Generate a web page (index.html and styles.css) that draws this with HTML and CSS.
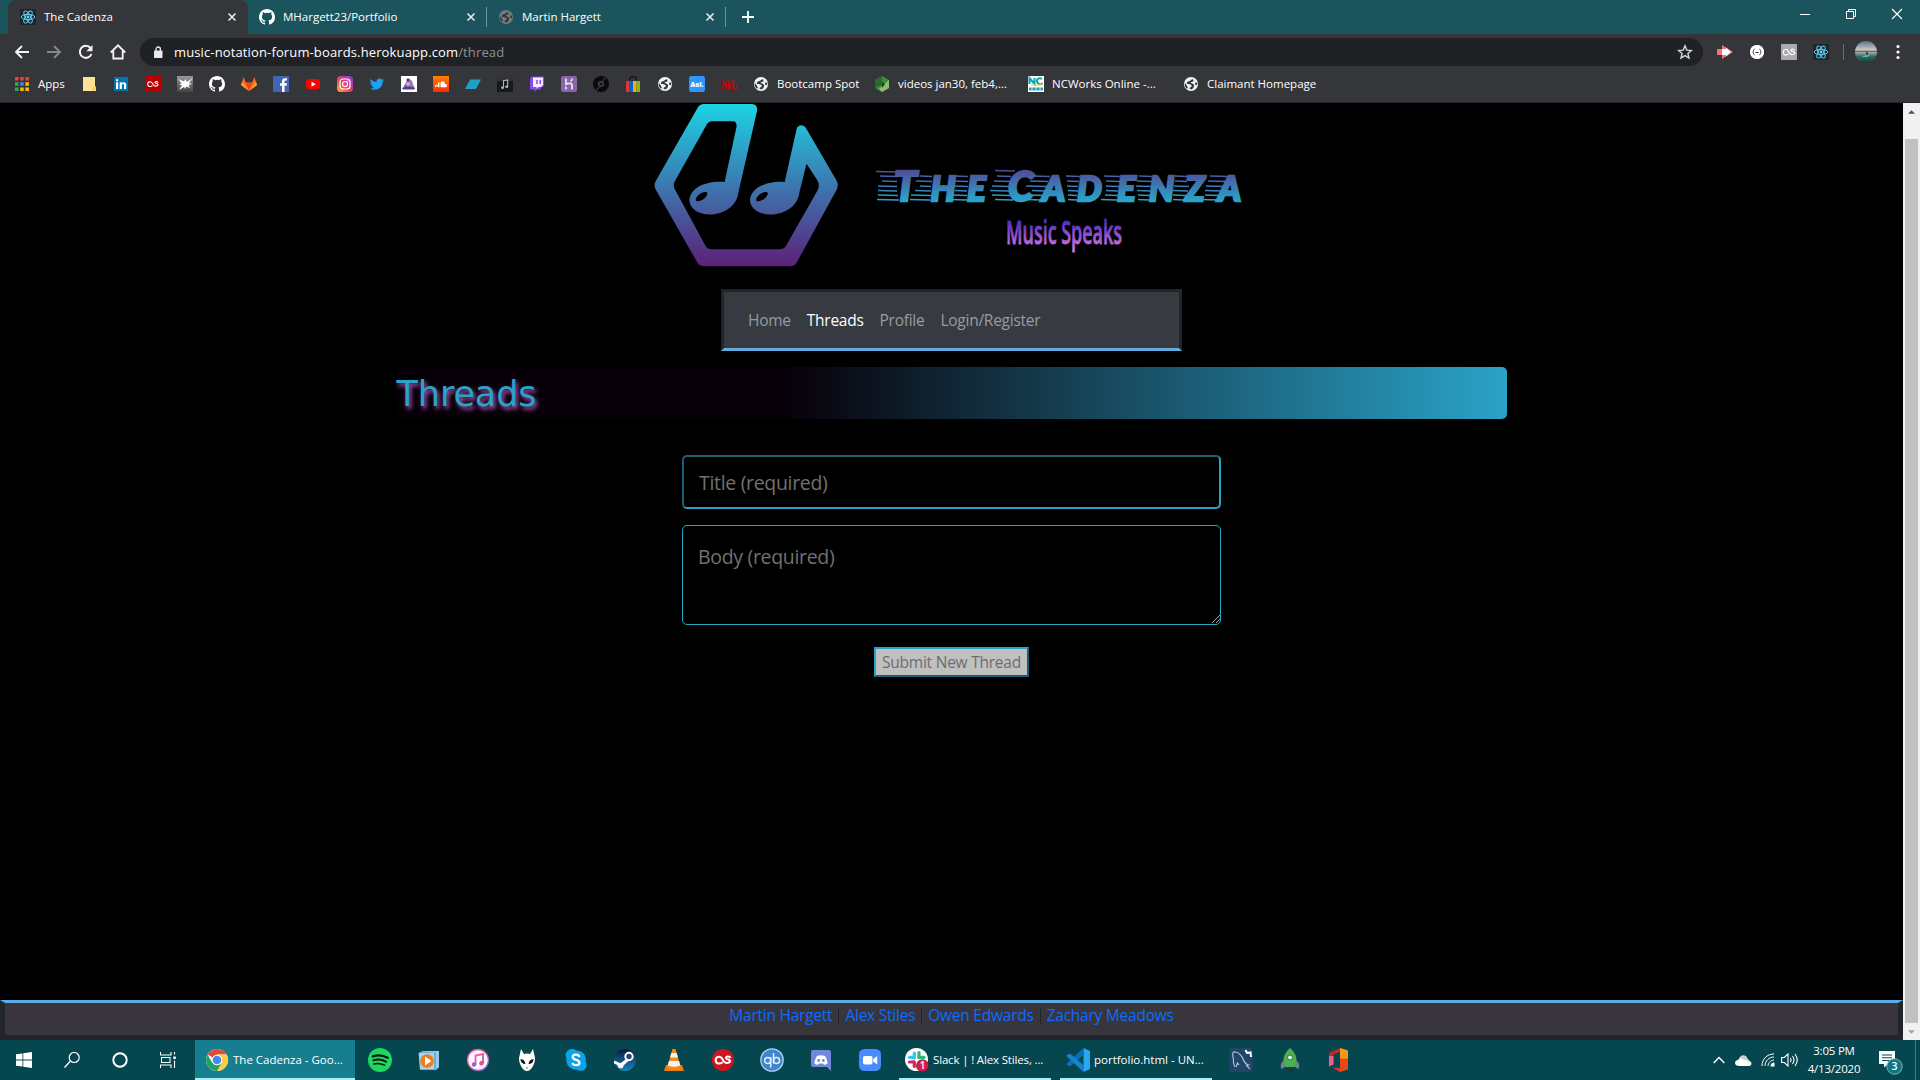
FILE: index.html
```html
<!DOCTYPE html>
<html lang="en">
<head>
<meta charset="utf-8">
<title>The Cadenza</title>
<link rel="stylesheet" href="styles.css">
</head>
<body>
<svg class="defs" width="0" height="0">
  <symbol id="react" viewBox="0 0 16 16"><rect width="16" height="16" rx="1" fill="#20232a"/><g fill="none" stroke="#61dafb" stroke-width=".9"><ellipse cx="8" cy="8" rx="6.8" ry="2.6"/><ellipse cx="8" cy="8" rx="6.8" ry="2.6" transform="rotate(60 8 8)"/><ellipse cx="8" cy="8" rx="6.8" ry="2.6" transform="rotate(120 8 8)"/></g><circle cx="8" cy="8" r="1.4" fill="#61dafb"/></symbol>
  <symbol id="github" viewBox="0 0 16 16"><path fill="#fff" d="M8 0C3.58 0 0 3.58 0 8c0 3.54 2.29 6.53 5.47 7.59.4.07.55-.17.55-.38 0-.19-.01-.82-.01-1.49-2.01.37-2.53-.49-2.69-.94-.09-.23-.48-.94-.82-1.13-.28-.15-.68-.52-.01-.53.63-.01 1.08.58 1.23.82.72 1.21 1.87.87 2.33.66.07-.52.28-.87.51-1.07-1.78-.2-3.64-.89-3.64-3.95 0-.87.31-1.59.82-2.15-.08-.2-.36-1.02.08-2.12 0 0 .67-.21 2.2.82a7.6 7.6 0 0 1 4 0c1.53-1.04 2.2-.82 2.2-.82.44 1.1.16 1.92.08 2.12.51.56.82 1.27.82 2.15 0 3.07-1.87 3.75-3.65 3.95.29.25.54.73.54 1.48 0 1.07-.01 1.93-.01 2.2 0 .21.15.46.55.38A8.01 8.01 0 0 0 16 8c0-4.42-3.58-8-8-8z"/></symbol>
  <symbol id="globe" viewBox="0 0 16 16"><circle cx="8" cy="8" r="7" fill="currentColor"/><path fill="#35363a" d="M10 3.200C8 3 8.300 4.600 6.500 4.900c-1.500.3-3 1.200-2.600 2.500.4 1.200 2.300.6 3.600 1 1.100.4 1.600 1.300 1 2.200-.6.800-1.600.8-2.100 2l1.800.8c1.300-.3 2.600-1.600 2.900-3.100.3-1.600-.8-2.600-2.400-3-1-.3-1.500-.6-.8-1.100.8-.5 2.300-.3 2.700-1.300z"/><path fill="#35363a" d="M2 7l1.800 2.500 1.200 2.700-1.500.3C2 11 1.500 9 2 7zM12 6.500l2.300.3c0 1-.3 1.800-.6 2.500l-1.500-.5z"/></symbol>
  <symbol id="close" viewBox="0 0 10 10"><path d="M1.500 1.500l7 7m0-7l-7 7" stroke="#e8eaed" stroke-width="1.600" fill="none"/></symbol>
</svg>

<header class="browser">
  <div class="tabstrip">
    <div class="tab active"><svg class="i16"><use href="#react"/></svg><span class="title">The Cadenza</span><svg class="x"><use href="#close"/></svg></div>
    <div class="tab"><svg class="i16"><use href="#github"/></svg><span class="title">MHargett23/Portfolio</span><svg class="x"><use href="#close"/></svg></div>
    <div class="tab last"><svg class="i16 dim"><use href="#globe"/></svg><span class="title">Martin Hargett</span><svg class="x"><use href="#close"/></svg></div>
    <svg class="newtab" viewBox="0 0 12 12"><path d="M6 0v12M0 6h12" stroke="#fff" stroke-width="1.800"/></svg>
    <div class="winbtns">
      <svg viewBox="0 0 12 12"><path d="M1 6.500h10" stroke="#fff"/></svg>
      <svg viewBox="0 0 12 12"><path d="M1.500 3.500h7v7h-7zM3.500 3.500v-2h7v7h-2" stroke="#fff" fill="none"/></svg>
      <svg viewBox="0 0 12 12"><path d="M1 1l10 10M11 1L1 11" stroke="#fff" stroke-width="1.100"/></svg>
    </div>
  </div>

  <div class="toolbar">
    <svg class="nav" viewBox="0 0 16 16"><path d="M15 8H2M8 2L2 8l6 6" fill="none" stroke="#f1f3f4" stroke-width="1.900"/></svg>
    <svg class="nav" viewBox="0 0 16 16"><path d="M1 8h13M8 2l6 6-6 6" fill="none" stroke="#85878a" stroke-width="1.900"/></svg>
    <svg class="nav" viewBox="0 0 16 16"><path d="M13.500 10A6 6 0 1 1 12.500 4" fill="none" stroke="#f1f3f4" stroke-width="2"/><path d="M14.500 1v6.200H8.300z" fill="#f1f3f4"/></svg>
    <svg class="nav" viewBox="0 0 16 16"><path d="M0.800 8.500L8 1.300l7.200 7.200M3.300 7v7.500h9.400V7" fill="none" stroke="#f1f3f4" stroke-width="1.800"/></svg>
    <div class="omnibox">
      <svg class="lock" viewBox="0 0 10 12"><rect x="1" y="4.500" width="8.500" height="7.500" rx=".8" fill="#e8eaed"/><path d="M3 5V3.200a2.200 2.200 0 0 1 4.400 0V5" fill="none" stroke="#e8eaed" stroke-width="1.300"/></svg>
      <span class="url"><span class="host">music-notation-forum-boards.herokuapp.com</span><span class="path">/thread</span></span>
      <svg class="star" viewBox="0 0 16 16"><path d="M8 1.800l1.800 4.300 4.600.4-3.500 3 1.100 4.600-4-2.500-4 2.500 1.100-4.600-3.500-3 4.600-.4z" fill="none" stroke="#d5d7da" stroke-width="1.400"/></svg>
    </div>
    <div class="exts">
      <svg viewBox="0 0 16 16"><path d="M0 5h5V1l11 7-11 7v-4H0z" fill="#f4736f"/><path d="M5 5h4v-1.500l5 4.500-5 4.500V11H5z" fill="#fff"/></svg>
      <svg viewBox="0 0 16 16"><circle cx="8" cy="8" r="7.700" fill="#fff" stroke="#222"/><path d="M5.500 5.200c-1.200 0-.6 2.200-1.800 2.800 1.200.6.6 2.800 1.800 2.800M10.500 5.200c1.200 0 .6 2.200 1.800 2.800-1.200.6-.6 2.800-1.800 2.800M6.500 8.500h3" fill="none" stroke="#333"/></svg>
      <svg viewBox="0 0 16 16"><rect width="16" height="16" rx="1" fill="#ababab"/><path d="M7.500 10.300C4 12 2 10.500 2.200 8 2.300 5 6 4.600 7.300 7.200c.9 2 1.400 3.500 3.600 3.400 3.400-.2 3.600-2.800 1-3.100-2.600-.3-1.900-2.500-.1-2.400 1 0 1.500.5 1.700 1.200" fill="none" stroke="#fff" stroke-width="1.200"/></svg>
      <svg><use href="#react"/></svg>
    </div>
    <span class="sep"></span>
    <svg class="avatar" viewBox="0 0 22 22"><defs><linearGradient id="av" x2="0" y2="1"><stop offset="0" stop-color="#5d7088"/><stop offset=".3" stop-color="#a9b3bd"/><stop offset=".42" stop-color="#d9c9bb"/><stop offset=".46" stop-color="#57564c"/><stop offset=".52" stop-color="#9aa9a4"/><stop offset=".7" stop-color="#35685f"/><stop offset="1" stop-color="#173d2e"/></linearGradient></defs><circle cx="11" cy="11" r="11" fill="url(#av)"/><path d="M7 15l8-1.500-2 2.500H8z" fill="#4bb6cf"/><path d="M11 11h2v3h-2z" fill="#593f39"/></svg>
    <svg class="dots" viewBox="0 0 4 16"><g fill="#fff"><circle cx="2" cy="2.500" r="1.600"/><circle cx="2" cy="8" r="1.600"/><circle cx="2" cy="13.500" r="1.600"/></g></svg>
  </div>

  <div class="bookmarks">
    <svg class="apps" viewBox="0 0 14 14"><path fill="#ea4335" d="M0 0h3.500v3.500H0zM5.200 0h3.500v3.500H5.200zM10.400 0h3.500v3.500h-3.500z"/><path fill="#34a853" d="M0 5.200h3.500v3.500H0zM0 10.400h3.500v3.500H0z"/><path fill="#4285f4" d="M5.200 5.200h3.500v3.500H5.200z"/><path fill="#fbbc05" d="M10.400 5.200h3.500v3.500h-3.500zM5.200 10.400h3.500v3.500H5.200zM10.400 10.400h3.500v3.500h-3.500z"/></svg>
    <span class="bk-label apps-label">Apps</span>
    <div class="bk-icons">
      <svg viewBox="0 0 16 16"><path d="M2 1h12v9l1 1v4H2z" fill="#fde293"/><path d="M11.500 14.500V11h2.700v3.500z" fill="#f7cf4d"/></svg>
      <svg viewBox="0 0 16 16"><rect x="1" y="1" width="14" height="14" fill="#0274b3"/><path d="M3 6.300h2.200V13H3zM3 3.200h2.200v2H3zM6.700 6.300h2v1c1-1.600 4.500-1.500 4.500 1.400V13H11V9.500c0-2-2.100-1.800-2.100 0V13H6.700z" fill="#fff"/></svg>
      <svg viewBox="0 0 16 16"><rect width="16" height="16" rx="1" fill="#b90000"/><path d="M7.500 9.800C4.500 11.300 2.500 10 2.700 8c.1-2.600 3.500-2.900 4.600-.8.900 1.900 1.400 3 3.200 2.900 3.100-.2 3.200-2.300 1-2.600-2.300-.3-1.700-2 .1-1.900.8 0 1.300.4 1.500.9" fill="none" stroke="#fff" stroke-width="1.100"/></svg>
      <svg viewBox="0 0 16 16"><defs><linearGradient id="gb" x2="0" y2="1"><stop stop-color="#999"/><stop offset="1" stop-color="#444"/></linearGradient></defs><rect width="16" height="16" fill="url(#gb)"/><path d="M15.500 2L10 6 8.500 3 7 5.500 1.500 3l3 4.500L2 8.500l3 .8L2 14l5-3 1.500 2 .5-2.500 4 1.500-1.500-3L15 8l-3-1z" fill="#fff"/></svg>
      <svg><use href="#github"/></svg>
      <svg viewBox="0 0 16 16"><path d="M8 15L0 9l2.700-8 2 5.500h6.600l2-5.500L16 9z" fill="#fc6d26"/><path d="M8 15L4.700 6.500h6.600z" fill="#e24329"/><path d="M0 9l1-3 7 9zM16 9l-1-3-7 9z" fill="#fca326"/></svg>
      <svg viewBox="0 0 16 16"><rect width="16" height="16" fill="#4267b2"/><path d="M9 16V9.800H7V7.200h2V5.500C9 3.300 10.300 2.200 12.200 2.200l1.800.1v2.300h-1.300c-1 0-1.200.5-1.200 1.200v1.400H14l-.4 2.600h-2.100V16z" fill="#fff"/></svg>
      <svg viewBox="0 0 16 16"><rect x="1" y="3" width="14" height="10.500" rx="3" fill="#f00"/><path d="M6.500 5.800v5L10.800 8.300z" fill="#fff"/></svg>
      <svg viewBox="0 0 16 16"><defs><linearGradient id="ig" x1="0" y1="1" x2="1" y2="0"><stop stop-color="#fdc04f"/><stop offset=".35" stop-color="#f4503f"/><stop offset=".65" stop-color="#c935a0"/><stop offset="1" stop-color="#6a4cdb"/></linearGradient></defs><rect width="16" height="16" rx="4" fill="url(#ig)"/><g fill="none" stroke="#fff" stroke-width="1.200"><rect x="3" y="3" width="10" height="10" rx="3"/><circle cx="8" cy="8" r="2.500"/></g><circle cx="11" cy="5" r=".7" fill="#fff"/></svg>
      <svg viewBox="0 0 16 16"><path d="M1.500 3c1.700 1.900 3.700 2.800 6 2.900C7 3 10.700 1.500 12.700 3.600L14.600 2.900 13.400 4.600l1.700-.5-1.500 1.600c.2 6.200-6.800 10.100-12.600 6.800 1.600.1 3-.3 4-1.300-1.300-.1-2.200-.9-2.600-2l1.200-.1C2.200 8.700 1.300 7.500 1.400 6.200l1.200.3C1.300 5.500.9 4.300 1.500 3z" fill="#1da1f2"/></svg>
      <svg viewBox="0 0 16 16"><rect width="16" height="16" fill="#fff"/><path d="M2 13l3-7 3-3.500 3 2.500 1 3 2 5z" fill="#9a7bb5"/><path d="M1 12c4-2 9-2 13 0l-1 1.500H2zM5 4l2-2 2 2-2 2zM3 9l2 1-1 2M10 8l3 1" fill="#4f4383"/><path d="M7 6l2 2-2 2-2-2z" fill="#e5b2d0"/></svg>
      <svg viewBox="0 0 16 16"><defs><linearGradient id="sc" x2="0" y2="1"><stop stop-color="#ff8000"/><stop offset="1" stop-color="#ff2a00"/></linearGradient></defs><rect width="16" height="16" fill="url(#sc)"/><path d="M2.500 9v2M4 8v3M5.500 6.500v4.700M7 6.500v4.700" stroke="#fff"/><path d="M8 11.200V5.700c2-1 4 .2 4.200 2.200 2.500-.2 2.500 3.300.3 3.300z" fill="#fff"/></svg>
      <svg viewBox="0 0 16 16"><path d="M5 3.500h11l-5 9.500H0z" fill="#1fa0c3"/></svg>
      <svg viewBox="0 0 16 16"><rect width="16" height="16" fill="#17181a"/><path d="M0 0h16v5H0z" fill="#333"/><path d="M6.500 11.500V4.800l4.200-.8v6.500" fill="none" stroke="#a9b7c6" stroke-width="1.100"/><ellipse cx="5.500" cy="11.700" rx="1.500" ry="1.200" fill="#a9b7c6"/><ellipse cx="9.700" cy="10.700" rx="1.500" ry="1.200" fill="#a9b7c6"/></svg>
      <svg viewBox="0 0 16 16"><path d="M2 .5h13v9l-4 4H8L5.500 16v-2.500H1V3z" fill="#8b45f5"/><path d="M4 1.500h10V9l-2.200 2H9.500l-2 1.700V11H4z" fill="#f3edff"/><path d="M8 4v4M11.300 4v4" stroke="#8b45f5" stroke-width="1.500"/></svg>
      <svg viewBox="0 0 16 16"><rect width="16" height="16" rx="2" fill="#8a66a8"/><path d="M5 2.500v5.700c2.500-1.300 6-1.300 6 .8v4.500M11 2.500c0 1.300-.4 2-1.200 2.800" fill="none" stroke="#eee6f5" stroke-width="1.700"/><path d="M4.200 10l2.400 1.900-2.400 2z" fill="#eee6f5"/></svg>
      <svg viewBox="0 0 16 16"><circle cx="8" cy="8" r="8" fill="#0a0a0b"/><circle cx="8" cy="8" r="3" fill="#45464a"/><circle cx="8" cy="8" r="1.600" fill="#111"/><path d="M9.500 5L13 1.500M6.500 11L3 14.500" stroke="#35363a" stroke-width="1.300"/></svg>
      <svg viewBox="0 0 16 16"><path d="M5 4V2.500C5 .3 11 .3 11 2.500V4" fill="none" stroke="#111" stroke-width="1.200"/><path d="M1 5h3.500v11H1z" fill="#e53238"/><path d="M4.500 5H8v11H4.500z" fill="#0064d2"/><path d="M8 5h3.500v11H8z" fill="#f5af02"/><path d="M11.500 5H15v11h-3.500z" fill="#86b817"/></svg>
      <svg class="lite"><use href="#globe"/></svg>
      <svg viewBox="0 0 16 16"><rect width="16" height="16" rx="2.500" fill="#2f96ff"/><text x="8" y="10.700" text-anchor="middle" font-family="Open Sans, sans-serif" font-weight="800" font-size="6.500" fill="#fff">Aol.</text></svg>
      <svg viewBox="0 0 16 16"><text x=".5" y="12.500" textLength="15" lengthAdjust="spacingAndGlyphs" font-family="Liberation Serif, serif" font-weight="700" font-size="12.500" fill="#d00000" stroke="#d00000" stroke-width=".4">NFL</text></svg>
    </div>
    <div class="bk b1"><svg class="i16 lite"><use href="#globe"/></svg><span class="bk-label">Bootcamp Spot</span></div>
    <div class="bk b2"><svg class="i16" viewBox="0 0 16 16"><path d="M8 0l7 4v8l-7 4-7-4V4z" fill="#3e8c3d"/><path d="M8 0L1 4v8l7-3z" fill="#276b2e"/><path d="M15 4v8l-7 4-3-3z" fill="#8dbd75"/><path d="M8 6l3 2-3 4z" fill="#173d1e"/></svg><span class="bk-label">videos jan30, feb4,...</span></div>
    <div class="bk b3"><svg class="i16" viewBox="0 0 16 16"><rect width="16" height="16" fill="#fff"/><path d="M1.500 8V2l5 6V2M14 3C11 1 8.500 3 9 5.500s3 3.500 5.500 1.700" fill="none" stroke="#12a0b5" stroke-width="2"/><path d="M3 9c3-2 6 1 10-2v2.500H3z" fill="#c8dc43"/><path d="M1 11.500h14v3H1z" fill="#279fb8"/><path d="M4 11v4M8 11v4M12 11v4" stroke="#fff" stroke-width=".7"/></svg><span class="bk-label">NCWorks Online -...</span></div>
    <div class="bk b4"><svg class="i16 lite"><use href="#globe"/></svg><span class="bk-label">Claimant Homepage</span></div>
  </div>
</header>

<div class="viewport">
  <main class="page">
    <svg class="logo" viewBox="640 103 623 170" role="img" aria-label="The Cadenza, Music Speaks">
      <defs>
        <linearGradient id="mark" gradientUnits="userSpaceOnUse" x1="0" y1="104" x2="0" y2="266"><stop offset="0" stop-color="#1cd3e4"/><stop offset=".5" stop-color="#3c78b0"/><stop offset="1" stop-color="#5d2079"/></linearGradient>
        <linearGradient id="word" gradientUnits="userSpaceOnUse" x1="0" y1="168" x2="0" y2="202"><stop offset="0" stop-color="#564594"/><stop offset="1" stop-color="#27a8cd"/></linearGradient>
        <linearGradient id="tag" gradientUnits="userSpaceOnUse" x1="0" y1="220" x2="0" y2="250"><stop offset="0" stop-color="#4a2bbd"/><stop offset="1" stop-color="#d978e0"/></linearGradient>
      </defs>
      <path fill="url(#mark)" fill-rule="evenodd" d="M704 104H751Q758 104 757 111L738.500 192C737 206 724 214.500 710 214.500C697 214.500 689.500 208 689.500 200C690 189 704 180.500 724.600 182L736.500 127Q737 121.300 733 121.300H712Q708.500 121.300 706.500 125L675.500 180Q672 185.300 675.500 190.500L705 245Q707.500 249.300 711 249.300H780Q784 249.300 786.500 245L817.500 190.500Q820 185.300 817.500 180.500L806.500 163.700L799.500 192C798 206 785 214.500 771 214.500C758 214.500 750 208 750 200C750.500 189 765 180.500 784.700 182L796.600 129C798 124 804 124 806.500 129L836.500 180.500Q839 185.300 836.500 190L797 262Q795 266.300 790 266.300H704Q699.500 266.300 697 262L656 190Q653 185.300 656 180.500L697.500 108Q699.500 104 704 104Z M696 201C694.500 197 701.500 191 706.500 192C709.500 194 703 202.500 696 201Z M756.500 201C755 197 762 191 767 192C770 194 763.500 202.500 756.500 201Z"/>
      <g stroke="url(#word)" stroke-width="1.500" fill="none">
        <path d="M876 171.500L898 172M880 176L897 176.500M882 181L897 181.500M878 186L897 186.500M878 190.500L897 191M878 195L898 195.500M877 199.500L899 200"/>
        <path d="M920 176L932 176.500M916 181L932 181.500M920 186L931 186.500M915 190.500L931 191M911 195L931 195.500M910 199.500L930 200"/>
        <path d="M953 176L968 176.500M952 181L968 181.500M954 186L968 186.500M955 190.500L967 191M953 195L967 195.500M950 199.500L967 200"/>
        <path d="M995 170.500L1015 171M997 176L1011 176.500M994 181L1010 181.500M992 186L1009 186.500M990 190.500L1009 191M992 195L1010 195.500M995 199.500L1013 200"/>
        <path d="M1032 176L1050 176.500M1030 181L1048 181.500M1026 186L1047 186.500M1032 190.500L1045 191M1030 195L1044 195.500M1027 199.500L1041 200"/>
        <path d="M1066 176L1080 176.500M1067 181L1079 181.500M1067 186L1078 186.500M1068 190.500L1078 191M1068 195L1077 195.500M1068 199.500L1077 200"/>
        <path d="M1104 176L1120 176.500M1106 181L1120 181.500M1106 186L1119 186.500M1106 190.500L1118 191M1105 195L1118 195.500M1101 199.500L1117 200"/>
        <path d="M1139 176L1153 176.500M1137 181L1152 181.500M1136 186L1152 186.500M1137 190.500L1151 191M1138 195L1150 195.500M1138 199.500L1149 200"/>
        <path d="M1175 176L1188 176.500M1175 181L1187 181.500M1174 186L1189 186.500M1173 190.500L1188 191M1173 195L1186 195.500M1173 199.500L1184 200"/>
        <path d="M1210 176L1228 176.500M1208 181L1226 181.500M1206 186L1224 186.500M1205 190.500L1222 191M1205 195L1220 195.500M1203 199.500L1218 200"/>
      </g>
      <g class="word" fill="url(#word)" stroke="url(#word)">
        <text class="cap" y="200.800" x="894">T</text>
        <text y="200.800" x="930.500 967">HE</text>
        <text class="cap" y="200.800" x="1008">C</text>
        <text y="200.800" x="1042 1077 1117 1149 1185 1218">ADENZA</text>
      </g>
      <text class="tag" x="1006" y="243.500" textLength="116" lengthAdjust="spacingAndGlyphs" fill="url(#tag)" stroke="url(#tag)">Music Speaks</text>
    </svg>

    <nav class="navbar">
      <a>Home</a><a class="on">Threads</a><a>Profile</a><a>Login/Register</a>
    </nav>

    <h1 class="banner">Threads</h1>

    <form class="thread-form">
      <div class="field title-field">Title (required)</div>
      <div class="field body-field">Body (required)<svg class="grip" viewBox="0 0 8 8"><path d="M0 8L8 0M4 8l4-4" stroke="#bbb" stroke-width=".9"/></svg></div>
      <div class="submit">Submit New Thread</div>
    </form>

    <footer class="footer">
      <a>Martin Hargett</a><i></i><a>Alex Stiles</a><i></i><a>Owen Edwards</a><i></i><a>Zachary Meadows</a>
    </footer>
  </main>
  <div class="scrollbar">
    <svg viewBox="0 0 8 4"><path d="M0 4l4-4 4 4z" fill="#505050"/></svg>
    <div class="thumb"></div>
    <svg viewBox="0 0 8 4"><path d="M0 0l4 4 4-4z" fill="#a3a3a3"/></svg>
  </div>
</div>

<div class="taskbar">
  <div class="sys">
    <svg viewBox="0 0 16 16"><path d="M0 2.300L6.500 1.400V7.600H0zM7.300 1.300L16 0v7.600H7.300zM0 8.400h6.500v6.200L0 13.700zM7.300 8.400H16V16l-8.700-1.300z" fill="#fff"/></svg>
    <svg viewBox="0 0 16 16"><circle cx="10.200" cy="5.500" r="5" fill="none" stroke="#fff" stroke-width="1.200"/><path d="M6.500 9L.5 15.500" stroke="#fff" stroke-width="1.300"/></svg>
    <svg viewBox="0 0 16 16"><circle cx="8" cy="8" r="6.700" fill="none" stroke="#fff" stroke-width="2"/></svg>
    <svg viewBox="0 0 16 16"><path d="M.5 0v3H11V0M.5 16v-3H11v3M1.500 5.500h8.500v5H1.500zM14.500 0v2.500M14.500 8.500V16" fill="none" stroke="#fff" stroke-width="1.100"/><path d="M13.300 4.500h2.500V7h-2.500z" fill="#fff"/></svg>
  </div>
  <div class="task open current">
    <svg viewBox="0 0 24 24"><circle cx="12" cy="12" r="11" fill="#fff"/><path d="M12 12L2.500 6.500A11 11 0 0 1 21.600 6.500H12z" fill="#dd4b3e"/><path d="M12 6.500h9.600A11 11 0 0 1 12 23l4.800-8.300z" fill="#fdcd40"/><path d="M2.500 6.500A11 11 0 0 0 12 23l4.800-8.300L12 17 7.200 14.700z" fill="#1ca261"/><circle cx="12" cy="12" r="5.300" fill="#fff"/><circle cx="12" cy="12" r="4.300" fill="#4688f1"/></svg>
    <span>The Cadenza - Goo...</span>
  </div>
  <div class="pins">
    <svg viewBox="0 0 24 24"><circle cx="12" cy="12" r="12" fill="#1ed760"/><g fill="none" stroke="#06180c" stroke-linecap="round"><path d="M4.800 8.300c5-1.500 10.500-1 14.800 1.500" stroke-width="2.300"/><path d="M5.300 12.300c4.500-1.300 9-.8 12.800 1.400" stroke-width="1.900"/><path d="M5.800 16c3.800-1 7.500-.6 10.800 1.200" stroke-width="1.500"/></g></svg>
    <svg viewBox="0 0 24 24"><path d="M1.500 5l4-2H22v16.500L19 22H3z" fill="#6bb1d6"/><path d="M5 3h17v16l-3 2V5z" fill="#93cbe8"/><path d="M2 5h15v16H3z" fill="#a9d3ea"/><circle cx="10" cy="13" r="6.800" fill="#ef7d1b"/><path d="M8 8.500v9l6.500-4.500z" fill="#fff"/></svg>
    <svg viewBox="0 0 24 24"><defs><linearGradient id="it" x1="0" y1="0" x2="1" y2="1"><stop stop-color="#fb5bc5"/><stop offset=".5" stop-color="#e0508c"/><stop offset="1" stop-color="#5585ee"/></linearGradient></defs><circle cx="12" cy="12" r="10.500" fill="#fbf7fc" stroke="url(#it)" stroke-width="1.300"/><path d="M9.500 16.500V7.500l7.500-1.500v9" fill="none" stroke="url(#it)" stroke-width="1.800"/><circle cx="8" cy="16.500" r="2.200" fill="#8c63e8"/><circle cx="15.500" cy="15.200" r="2.200" fill="#ed4a83"/></svg>
    <svg viewBox="0 0 24 24"><path d="M6 1l3 5q3-1 6 0l3-5 2 9c.3 5-3.500 13-8 13S3.700 15 4 10z" fill="#fff"/><path d="M5.500 11c3 .3 4.500 2 5 5-3 0-5-1.700-5-5zM18.500 11c-3 .3-4.500 2-5 5 3 0 5-1.700 5-5z" fill="#111"/><path d="M11 19.500h2l-1 1.500z" fill="#444"/></svg>
    <svg viewBox="0 0 24 24"><path d="M7.500 1c2-.3 4 .6 5 1.500C19 2.500 23 8 21.600 13.500 24.500 18 21 23.500 16 22.800c-1.500 0-2.500-.7-3.500-1.300C6 21.500 1.500 16.500 2.500 10.500 0 6.500 3 1 7.500 1z" fill="#0ba4ea"/><path d="M15.300 9c-.4-3.300-6.600-3-6.600 0 0 3.500 6.800 2.200 6.800 5.700 0 3.200-6.500 3.300-7 .2" fill="none" stroke="#fff" stroke-width="2.300"/></svg>
    <svg viewBox="0 0 24 24"><defs><linearGradient id="st" x2="0" y2="1"><stop stop-color="#0e1a3c"/><stop offset="1" stop-color="#1684bd"/></linearGradient></defs><circle cx="12" cy="12" r="11" fill="url(#st)"/><circle cx="16" cy="8.500" r="3.700" fill="#254472" stroke="#fff" stroke-width="2"/><path d="M1 12.500l6.500 2.700 6-4.500 3 1.300-6 5.500c0 4-5.500 3.800-6-.5L1 15.500z" fill="#fff"/></svg>
    <svg viewBox="0 0 24 24"><path d="M4 17h16l2 6H2z" fill="#f07d0b"/><path d="M10.500 1h3L19 20q-7 3-14 0z" fill="#f58a16"/><path d="M9.300 5h5.400l1.300 4.500H8zM7 13h10l1.300 4.500q-6.300 2.500-12.600 0z" fill="#f2f2f2"/></svg>
    <svg viewBox="0 0 24 24"><circle cx="12" cy="12" r="11" fill="#ce1620"/><path d="M11.500 14.300C7.500 16.800 4.500 15 4.700 12c.2-4 5.200-4.300 6.700-1 1 2.700 2 4 4.200 4 4.300-.2 4.500-3.200 1.500-3.600-3.200-.4-2.500-3.200.1-3 1.200 0 1.900.6 2.200 1.400" fill="none" stroke="#fff" stroke-width="2"/></svg>
    <svg viewBox="0 0 24 24"><circle cx="12" cy="12" r="11.200" fill="#3f85cc" stroke="#a9cdee" stroke-width="1.300"/><g fill="none" stroke="#e2effb" stroke-width="1.500"><circle cx="7.700" cy="12.500" r="3"/><path d="M10.700 9v10.500M13.500 5v10.500"/><circle cx="16.500" cy="12.500" r="3"/></g></svg>
    <svg viewBox="0 0 24 24"><path d="M4 2h16q2 0 2 2v19l-4-4H4q-2 0-2-2V4q0-2 2-2z" fill="#7289da"/><path d="M8 8q4-1.500 8 0c2 3 2.500 5.500 2.500 7.500q-1.500 1.300-3.500 1.300l-1-1.300h-4l-1 1.300q-2 0-3.500-1.300C5.500 13.500 6 11 8 8z" fill="#fff"/><circle cx="9.700" cy="12.500" r="1.400" fill="#7289da"/><circle cx="14.300" cy="12.500" r="1.400" fill="#7289da"/></svg>
    <svg viewBox="0 0 24 24"><rect x="1" y="1" width="22" height="22" rx="5.500" fill="#4a8cff"/><rect x="5" y="8" width="9.500" height="8.500" rx="1.800" fill="#fff"/><path d="M15.200 11l4-3v8.500l-4-3z" fill="#fff"/></svg>
  </div>
  <div class="task open slack">
    <svg viewBox="0 0 24 24"><circle cx="11.500" cy="11.500" r="11.500" fill="#fff"/><g stroke-width="3.200" stroke-linecap="round"><path d="M9.300 5v5" stroke="#36c5f0"/><path d="M4.500 9.300H9" stroke="#36c5f0"/><path d="M14 4.500V9.300" stroke="#2eb67d"/><path d="M14 9.300h5" stroke="#2eb67d"/><path d="M9.300 14v4.500M4.500 14H9" stroke="#e01e5a"/><path d="M14 14h5" stroke="#ecb22e"/></g><circle cx="17.500" cy="17.800" r="6" fill="#d81b4a" stroke="#7a1330" stroke-width=".8"/><text x="17.500" y="21.300" font-family="Open Sans, sans-serif" font-size="10" font-weight="600" fill="#fff" text-anchor="middle">1</text></svg>
    <span>Slack | ! Alex Stiles, ...</span>
  </div>
  <div class="task open code">
    <svg viewBox="0 0 24 24"><path d="M17.500 0L24 3v18l-6.500 3z" fill="#29a8f2"/><path d="M17.500 0v7L4 18.500 0 16.300z" fill="#0a6fb8"/><path d="M17.500 24v-7L4 5.500 0 7.700z" fill="#1683cf"/></svg>
    <span>portfolio.html - UN...</span>
  </div>
  <div class="pins tail">
    <svg viewBox="0 0 24 24"><rect width="24" height="24" rx="2" fill="#1f4568"/><path d="M6 19C3.500 15 5 12 4 9 3 5.500 4 3.500 6.500 4c4 .8 6.500 4 8 8 1 2.500 2 4 5 5l-2 .5 3.500 3.500M7 19l1.500-4 1.500 2" fill="none" stroke="#b6c7d6" stroke-width="1.100"/><path d="M16.500 2l1.500 3 3.500-.5.500 4.500" fill="none" stroke="#fff" stroke-width="2"/></svg>
    <svg viewBox="0 0 24 24"><path d="M12 0c7 6 8 13 4.500 19h-9C4 13 5 6 12 0z" fill="#4caf50"/><path d="M6 12c-4 3-4 7-2 9l4-3zM18 12c4 3 4 7 2 9l-4-3z" fill="#668a7e"/><circle cx="12" cy="9.500" r="2.500" fill="#e5f5e5" stroke="#2c7a35"/><path d="M8 22.500h8" stroke="#2a2f33" stroke-width="1.500"/></svg>
    <svg viewBox="0 0 24 24"><path d="M13 0l8 2.500v19L13 24z" fill="#e64a10"/><path d="M13 0l8 2.500v8h-8z" fill="#f59a1c"/><path d="M13 0L2 4.500v14l4.500-2V6.500L13 4z" fill="#c2252a"/><path d="M2 8v10.500l4.500-2V8z" fill="#e8618a"/><path d="M5 19.500l8 .5v4z" fill="#e02c3c"/></svg>
  </div>
  <div class="tray">
    <svg class="chev" viewBox="0 0 12 8"><path d="M.7 7L6 1.500 11.300 7" fill="none" stroke="#fff" stroke-width="1.400"/></svg>
    <svg class="cloud" viewBox="0 0 17 11"><path d="M4 4C5-.5 11-1 12.500 3.500L17 8 4 11z" fill="#c9d3d6"/><path d="M3.500 11C-1 11-1 5 3 5c2-2.500 5-1.500 6 .5 1.500-1 3.500-.3 4 1.300 4-.5 4.500 4.200 1 4.200z" fill="#fff"/></svg>
    <svg class="wifi" viewBox="0 0 14 14"><g fill="none" stroke="#fff"><path d="M1 13C1 6 6 1 13 1"/><path d="M4 13c0-5 4-9 9-9"/><path d="M7 13c0-3 3-6 6-6"/></g><path d="M9.500 13.500a4 4 0 0 1 4-4v4z" fill="#fff"/></svg>
    <svg class="spk" viewBox="0 0 18 14"><g fill="none" stroke="#fff" stroke-width="1.100"><path d="M.6 4.500h2.700L7 1v12L3.300 9.500H.6z"/><path d="M9.300 5q1.500 2 0 4M11.500 3q3 4 0 8M14 1q4.500 6 0 12"/></g></svg>
    <div class="clock"><span>3:05 PM</span><span>4/13/2020</span></div>
    <svg class="note" viewBox="0 0 24 24"><path d="M0 0h16v13H9l-4 3.500V13H0z" fill="#fff"/><path d="M3 4h10M3 6.800h10M3 9.500h10" stroke="#05454f" stroke-width="1.100"/><circle cx="15.500" cy="15.500" r="7.700" fill="#0b7685" stroke="#8fc0c7" stroke-width=".9"/><text x="15.500" y="19.200" font-family="Open Sans, sans-serif" font-size="10.500" font-weight="600" fill="#fff" text-anchor="middle">3</text></svg>
    <span class="peek"></span>
  </div>
</div>
</body>
</html>
```

FILE: styles.css
```css
* { box-sizing: border-box; }
body { margin: 0; width: 1920px; height: 1080px; display: flex; flex-direction: column; overflow: hidden; background: #000; color: #fff; font-family: "Open Sans", "Noto Sans", sans-serif; font-size: 11.5px; }
.defs { position: absolute; }
svg { display: block; flex: none; }
span, a { white-space: nowrap; }
.i16 { width: 16px; height: 16px; }
.lite { color: #f1f3f4; }
.dim { color: #77797d; }

/* Browser chrome */
.browser { height: 103px; flex: none; background: #35363a; border-bottom: 1px solid #242528; }
.tabstrip { height: 34px; display: flex; background: #1b545c; padding-left: 8px; }
.tab { width: 239px; height: 34px; display: flex; align-items: center; padding: 0 11px 0 11px; }
.tab.active { width: 240px; background: #35363a; border-radius: 8px 8px 0 0; padding-left: 12px; }
.tab .title { margin-left: 8px; padding-bottom: 2px; flex: 1; }
.tab .x { width: 10px; height: 10px; }
.tab.last { position: relative; }
.tab.last::before, .tab.last::after { content: ""; position: absolute; top: 7px; width: 1px; height: 20px; background: #6f9398; }
.tab.last::before { left: -1px; }
.tab.last::after { right: 0; }
.newtab { width: 12px; height: 12px; margin: 11px 0 0 16px; }
.winbtns { margin-left: auto; display: flex; gap: 34px; padding: 8px 17px 0 0; }
.winbtns svg { width: 12px; height: 12px; }
.toolbar { height: 36px; display: flex; align-items: center; padding-left: 14px; }
.nav { width: 16px; height: 16px; margin-right: 16px; }
.omnibox { width: 1563px; height: 28px; margin: 0 0 0 -2px; border-radius: 14px; background: #202124; display: flex; align-items: center; padding: 0 10px 0 13px; }
.lock { width: 10px; height: 12px; margin-right: 11px; }
.url { flex: 1; font-size: 13px; letter-spacing: 0.13px; }
.path { color: #8d9094; }
.star { width: 16px; height: 16px; }
.exts { display: flex; gap: 16.300px; margin-left: 13.500px; }
.exts svg { width: 16px; height: 16px; }
.sep { width: 1px; height: 16px; margin: 0 11px 0 14px; background: #6d6e72; }
.avatar { width: 22px; height: 22px; }
.dots { width: 4px; height: 16px; margin-left: 19px; }
.bookmarks { height: 28px; display: flex; align-items: center; padding-left: 15px; }
.bk-label { padding-bottom: 1px; }
.apps { width: 14px; height: 14px; margin-right: 9px; }
.apps-label { width: 43px; }
.bk-icons { display: flex; gap: 16px; margin-right: 16px; }
.bk-icons svg { width: 16px; height: 16px; }
.bk { display: flex; align-items: center; gap: 8px; }
.b1 { width: 121px; }
.b2 { width: 154px; }
.b3 { width: 155px; }

/* Page */
.viewport { height: 937px; display: flex; flex: none; }
.page { width: 1903px; display: flex; flex-direction: column; align-items: center; }
.logo { width: 623px; height: 170px; }
.word { font-family: Lato, sans-serif; font-weight: 900; font-style: italic; font-size: 35px; stroke-width: 2.400; }
.word .cap { font-size: 41px; }
.tag { font-family: "Open Sans", sans-serif; font-weight: 600; font-size: 32px; stroke-width: 0.800; }
.navbar { width: 461px; height: 62px; margin-top: 16px; background: #373a40; border: 3px solid #212529; border-bottom-color: #5dade2; padding: 0 24px; display: flex; align-items: center; gap: 16px; font-size: 15.500px; letter-spacing: -0.260px; color: #9a9c9f; }
.navbar .on { color: #fff; }
.banner { width: 1110px; height: 52px; margin: 16px 0 36px; padding-top: 1px; border-radius: 5px; background: linear-gradient(to right, #080008 35%, #2aa3c8); color: #2aa3c8; font: 400 35px/52px "DejaVu Sans", sans-serif; letter-spacing: -0.090px; text-shadow: 2px 3px 4px #b45ac0; }
.thread-form { display: flex; flex-direction: column; align-items: center; }
.field { width: 539px; border-radius: 5px; color: #6f7173; font-size: 19.500px; letter-spacing: -0.320px; padding: 0 15px; }
.title-field { height: 54px; border: 2px inset #2aa3c8; line-height: 51px; }
.body-field { height: 100px; margin: 16px 0 22px; border: 1px solid #2aa3c8; line-height: 62px; position: relative; }
.grip { position: absolute; right: 0; bottom: 1px; width: 8px; height: 8px; }
.submit { width: 155px; height: 30px; border: 2px outset #2aa3c8; background: #c0c0c0; color: #6d6d6d; font-size: 15.500px; letter-spacing: -0.230px; line-height: 27px; text-align: center; white-space: nowrap; }
.footer { width: 1903px; height: 40px; margin-top: auto; background: #38363c; border: 5px solid #212529; border-top: 3px solid #5dade2; display: flex; justify-content: center; font-size: 15.500px; letter-spacing: -0.240px; line-height: 24px; color: #0a6cff; }
.footer i { width: 1px; height: 17px; margin: 5px 6px 0; background: #212529; }
.scrollbar { width: 17px; background: #f1f1f1; display: flex; flex-direction: column; align-items: center; padding: 7px 0 6px; }
.scrollbar svg { width: 7px; height: 4px; }
.thumb { width: 13px; height: 884px; margin: 25px 0 auto; background: #c1c1c1; }

/* Taskbar */
.taskbar { height: 40px; display: flex; align-items: stretch; background: #05464f; }
.sys { width: 195px; display: flex; align-items: center; gap: 32px; padding-left: 16px; }
.sys svg { width: 16px; height: 16px; }
.task { display: flex; align-items: center; }
.task svg { width: 24px; height: 24px; margin-right: 4px; }
.task span { padding-bottom: 2px; }
.open { border-bottom: 2px solid #a9eef7; padding-top: 2px; }
.current { width: 160px; background: #167e8e; padding-left: 10px; }
.pins { display: flex; align-items: center; gap: 25px; margin-left: 13px; }
.pins svg { width: 24px; height: 24px; }
.slack { width: 152px; margin-left: 17px; padding-left: 6px; letter-spacing: -0.160px; }
.code { width: 152px; margin-left: 9px; padding-left: 6px; }
.tail { margin-left: 17px; }
.tray { margin-left: auto; display: flex; align-items: center; }
.chev { width: 12px; height: 8px; margin-right: 9.500px; }
.cloud { width: 17px; height: 11px; margin-right: 9px; }
.wifi { width: 14px; height: 14px; margin-right: 6.500px; }
.spk { width: 18px; height: 14px; margin-right: 8px; }
.clock { width: 54px; display: flex; flex-direction: column; align-items: center; line-height: 18px; letter-spacing: -0.220px; margin-right: 18px; }
.note { width: 24px; height: 24px; margin-top: 6px; }
.peek { width: 1px; height: 40px; margin: 0 4px 0 12px; background: #4a7a81; }
```
